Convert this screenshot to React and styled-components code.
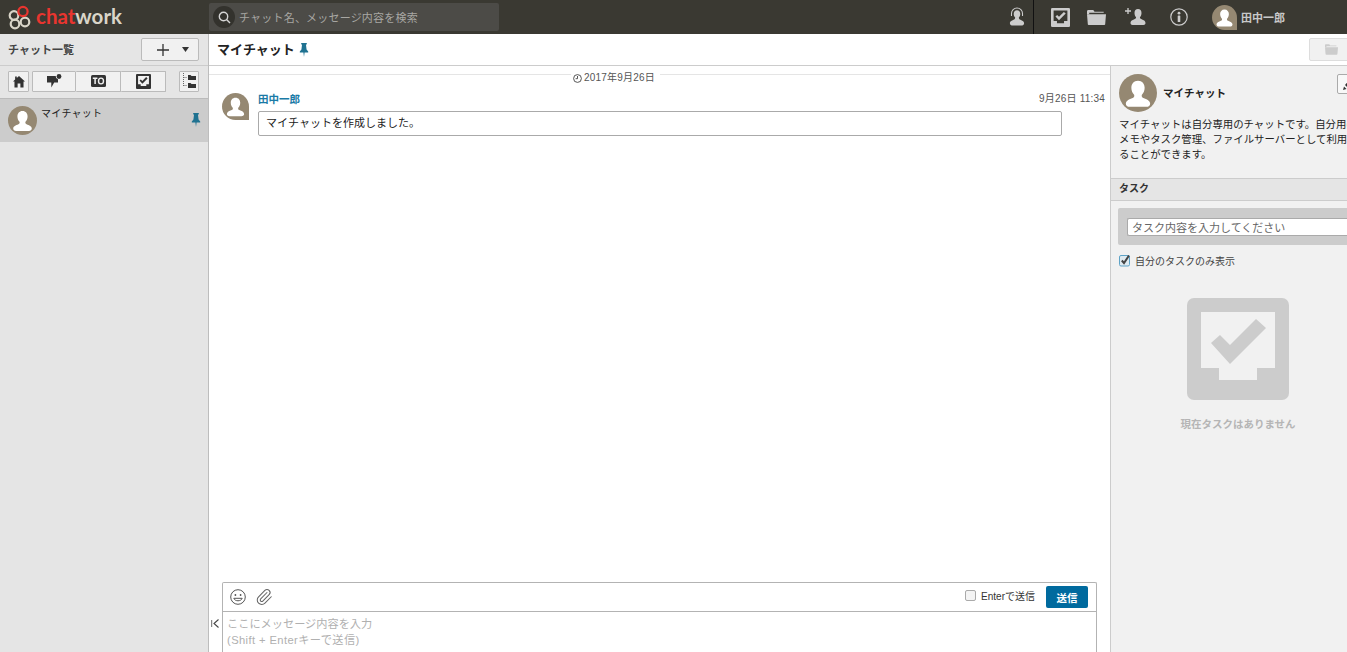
import React from 'react'
import styled, { createGlobalStyle } from 'styled-components'
import { Paperclip } from 'lucide-react'

const GlobalStyle = createGlobalStyle`
  html, body {
    margin: 0;
    height: 100%;
    overflow: hidden;
    background: #fff;
  }
  body {
    font-family: "Liberation Sans", "Noto Sans CJK JP", sans-serif;
    font-size: 11px;
    color: #222;
  }
  * { box-sizing: border-box; }
`

const Page = styled.div`
  width: 1347px;
  height: 652px;
  overflow: hidden;
  display: flex;
  flex-direction: column;
`

// Top bar
const TopBar = styled.header`
  height: 34px;
  flex: none;
  background: #3a3932;
  display: flex;
  align-items: center;
`
const LogoBox = styled.div`
  width: 209px;
  flex: none;
  display: flex;
  align-items: center;
  padding-left: 8px;
  gap: 4px;
`
const LogoText = styled.span`
  font-family: "Lato", sans-serif;
  font-weight: 700;
  font-size: 20.5px;
  line-height: 24px;
  margin-bottom: 3px;
  color: #d9d5c8;
  em { font-style: normal; color: #e9352f; }
`
const Search = styled.div`
  width: 290px;
  height: 28px;
  background: #4c4b47;
  border-radius: 2px;
  display: flex;
  align-items: center;
  padding-left: 4px;
  gap: 4px;
  letter-spacing: 0.2px;
  color: #a8a7a3;
`
const SearchIcon = styled.span`
  width: 22px;
  height: 22px;
  border-radius: 50%;
  background: #33322d;
  display: flex;
  align-items: center;
  justify-content: center;
`
const TopIcons = styled.div`
  margin-left: auto;
  height: 34px;
  display: flex;
  align-items: center;
  padding-right: 62px;
`
const TopIcon = styled.span`
  width: ${p => p.$w}px;
  height: 34px;
  flex: none;
  display: flex;
  align-items: center;
  justify-content: center;
  border-right: ${p => (p.$sep ? '1px solid #111' : 'none')};
`
const UserName = styled.span`
  color: #c8c8c8;
  font-weight: 700;
  margin-left: 4px;
`

// Body
const Body = styled.div`
  flex: 1;
  min-height: 0;
  display: flex;
`
const Sidebar = styled.aside`
  width: 209px;
  flex: none;
  background: #e5e5e5;
  border-right: 1px solid #bdbdbd;
  display: flex;
  flex-direction: column;
`
const SideTitleRow = styled.div`
  height: 32px;
  flex: none;
  display: flex;
  align-items: center;
  justify-content: space-between;
  padding: 0 9px 0 8px;
  border-bottom: 1px solid #ccc;
`
const SideTitle = styled.span`
  font-weight: 700;
  font-size: 11px;
  margin-bottom: 2px;
  color: #444;
`
const PlusButton = styled.button`
  width: 58px;
  height: 23px;
  padding: 0 9px 0 15px;
  background: #f1f1f1;
  border: 1px solid #bbb;
  border-radius: 2px;
  display: flex;
  align-items: center;
  justify-content: space-between;
`
const FilterRow = styled.div`
  height: 33px;
  flex: none;
  display: flex;
  align-items: center;
  padding: 0 9px 2px 8px;
  border-bottom: 1px solid #bbb;
`
const FilterBtn = styled.button`
  width: ${p => p.$w}px;
  height: 21px;
  padding: 0;
  background: #f1f1f1;
  border: 1px solid #bbb;
  margin-left: ${p => p.$ml || 0}px;
  border-left-width: ${p => (p.$joined ? 0 : 1)}px;
  border-radius: 1px;
  display: flex;
  align-items: center;
  justify-content: center;
`
const RoomRow = styled.div`
  height: 43px;
  background: #ccc;
  display: flex;
  padding: 7px 5px 0 8px;
`
const RoomName = styled.span`
  margin: 1px 0 0 4px;
  font-size: 10px;
  line-height: 14px;
  letter-spacing: 0.2px;
  color: #222;
`
const RoomPin = styled.span`
  margin-left: auto;
  padding-top: 7px;
`
const Avatar = styled.span`
  width: ${p => p.$size}px;
  height: ${p => p.$size}px;
  flex: none;
  background: #958872;
  border-radius: ${p => (p.$cut ? '50% 50% 0 50%' : '50%')};
  overflow: hidden;
  display: block;
  svg { display: block; width: 100%; height: 100%; }
`

// Chat column
const Main = styled.main`
  flex: 1;
  min-width: 0;
  display: flex;
  flex-direction: column;
`
const ChatHeader = styled.div`
  height: 32px;
  flex: none;
  border-bottom: 1px solid #ccc;
  display: flex;
  align-items: center;
  padding-left: 8px;
  gap: 2px;
`
const ChatTitle = styled.h1`
  margin: 0 0 2px;
  font-size: 13px;
  font-weight: 700;
  color: #222;
`
const FileButton = styled.div`
  margin-left: auto;
  width: 60px;
  margin-right: -22px;
  height: 23px;
  background: #f1f1f1;
  border: 1px solid #ddd;
  border-radius: 2px;
  display: flex;
  align-items: center;
  padding-left: 15px;
`
const Columns = styled.div`
  flex: 1;
  min-height: 0;
  display: flex;
`
const ChatColumn = styled.section`
  width: 901px;
  flex: none;
  display: flex;
  flex-direction: column;
`
const DateRow = styled.div`
  height: 27px;
  flex: none;
  display: flex;
  align-items: flex-start;
`
const DateLine = styled.span`
  flex: ${p => (p.$left ? '0 0 362px' : '1')};
  margin-top: 8px;
  border-top: 1px solid #e5e5e5;
`
const DateLabel = styled.span`
  display: flex;
  align-items: center;
  gap: 2px;
  padding: 5px 5px 0 2px;
  font-size: 10px;
  letter-spacing: 0.2px;
  line-height: 14px;
  color: #555;
`
const Message = styled.article`
  display: flex;
  padding: 0 5px 0 13px;
`
const MessageBody = styled.div`
  flex: 1;
  margin-left: 9px;
`
const MessageMeta = styled.div`
  display: flex;
  justify-content: space-between;
  height: 18px;
  line-height: 12px;
`
const Sender = styled.span`
  font-weight: 700;
  font-size: 10.5px;
  color: #1a7aa6;
`
const Stamp = styled.span`
  font-size: 10px;
  letter-spacing: 0.2px;
  color: #555;
`
const Bubble = styled.div`
  width: 804px;
  height: 25px;
  border: 1px solid #aaa;
  border-radius: 2px;
  padding-left: 7px;
  line-height: 22px;
  color: #222;
`
const ComposerRow = styled.div`
  margin-top: auto;
  display: flex;
  padding-left: 1px;
`
const Collapse = styled.span`
  width: 12px;
  flex: none;
  padding: 37px 0 0 1px;
`
const Composer = styled.div`
  width: 875px;
  height: 70px;
  border: 1px solid #b3b3b3;
  border-bottom: none;
  border-radius: 2px 2px 0 0;
`
const ComposerBar = styled.div`
  height: 29px;
  border-bottom: 1px solid #b3b3b3;
  display: flex;
  align-items: center;
  padding: 0 8px 0 7px;
  gap: 9px;
`
const EnterLabel = styled.label`
  margin: 0 2px 3px auto;
  display: flex;
  align-items: center;
  gap: 5px;
  font-size: 10px;
  color: #333;
`
const EmptyBox = styled.span`
  width: 11px;
  height: 11px;
  background: #f4f4f4;
  border: 1px solid #aaa;
  border-radius: 2px;
`
const SendButton = styled.button`
  width: 42px;
  height: 22px;
  padding: 0;
  border: none;
  border-radius: 2px;
  background: #006a9e;
  color: #fff;
  font: 700 10.5px "Liberation Sans", "Noto Sans CJK JP", sans-serif;
`
const Placeholder = styled.div`
  padding: 4px 4px 0;
  font-size: 11.2px;
  line-height: 16px;
  color: #b0b0b0;
`
const ShiftHint = styled.span`
  letter-spacing: 0.4px;
`

// Right pane
const RightPane = styled.aside`
  width: 255px;
  flex: none;
  background: #f1f1f1;
  border-left: 1px solid #ccc;
`
const RoomInfo = styled.div`
  height: 112px;
  padding: 8px 0 0 8px;
`
const RoomHead = styled.div`
  display: flex;
  align-items: center;
  gap: 6px;
`
const RoomTitle = styled.strong`
  font-size: 10.5px;
  margin-bottom: 2px;
  color: #222;
`
const EditButton = styled.span`
  margin: 0 6px 18px auto;
  width: 22px;
  height: 20px;
  background: #f8f8f8;
  border: 1px solid #aaa;
  border-radius: 2px;
  display: flex;
  align-items: center;
  justify-content: center;
`
const RoomDesc = styled.p`
  margin: 5px 0 0;
  width: 241px;
  font-size: 10.4px;
  line-height: 15px;
  color: #222;
`
const SectionBar = styled.div`
  height: 23px;
  background: #e5e5e5;
  border-top: 1px solid #ccc;
  border-bottom: 1px solid #ccc;
  padding-left: 8px;
  line-height: 19px;
  font-size: 10px;
  font-weight: 700;
  color: #333;
`
const TaskForm = styled.div`
  margin: 7px 0 0 7px;
  height: 37px;
  background: #ccc;
  border-radius: 2px;
  padding: 10px 0 0 9px;
`
const TaskInput = styled.div`
  height: 18px;
  background: #fff;
  border-top: 1px solid #aaa;
  border-bottom: 1px solid #aaa;
  border-left: 1px solid #aaa;
  border-radius: 2px;
  padding-left: 4px;
  line-height: 18px;
  font-size: 11px;
  color: #666;
`
const MineRow = styled.div`
  margin: 8px 0 0 8px;
  display: flex;
  align-items: center;
  gap: 4px;
  height: 14px;
  font-size: 10px;
  color: #444;
`
const EmptyState = styled.div`
  margin-top: 31px;
  display: flex;
  flex-direction: column;
  align-items: center;
  gap: 16px;
  font-size: 10.5px;
  font-weight: 700;
  color: #b5b5b5;
`

// Icons
const Person = () => (
  <svg viewBox="0 0 40 40">
    <path fill="#fff" d="M20 7c-4.500 0-7 3.400-7 7.500 0 3 1.100 5.600 2.900 7.300.6 1.600-.1 2.800-1.500 3.400-3.700 1.400-7.200 2.800-7.200 6 0 1.900 1.600 3.300 4 3.300h17.600c2.400 0 4-1.400 4-3.300 0-3.200-3.500-4.600-7.200-6-1.400-.6-2.100-1.800-1.500-3.400 1.800-1.700 2.900-4.300 2.900-7.300C27 10.400 24.500 7 20 7z" />
  </svg>
)

const Pin = () => (
  <svg width="14" height="14" viewBox="0 0 12 12" style={{ display: 'block' }}>
    <path fill="#1f7291" d="M3.600 0h4.800v1l-.7.500.5 4.100L9.600 7.200v.9H6.500L6 12l-.5-3.900H2.400v-.9l1.400-1.600.5-4.100-.7-.5z" />
  </svg>
)

const Logo = () => (
  <svg width="24" height="25" viewBox="0 0 24 25" fill="none" strokeWidth="2.200">
    <circle cx="6" cy="10.500" r="4.300" stroke="#d9d5c8" />
    <circle cx="7" cy="19" r="4.300" stroke="#d9d5c8" />
    <circle cx="17" cy="17" r="4.300" stroke="#d9d5c8" />
    <circle cx="15" cy="6.500" r="4.600" stroke="#e9352f" />
  </svg>
)

const TaskGlyph = ({ size, fg, inner }) => (
  <svg width={size} height={size} viewBox="0 0 102 102" style={{ display: 'block' }}>
    <rect width="102" height="102" rx="7" fill={fg} />
    <path fill={inner} d="M14 14h74v56H70v12H32V70H14z" />
    <path fill={fg} d="M24 45L33 37 43 47 69 21 79 30 43 66z" />
  </svg>
)

const HomeIcon = () => (
  <svg width="12" height="13" viewBox="0 0 13 14">
    <path fill="#333" d="M6.500 1L13 7h-1.600v6.500H8V9.200H5v4.300H1.600V7H0l2.300-2.100V1.500h1.800v1.800z" />
  </svg>
)
const CommentIcon = () => (
  <svg width="15" height="14" viewBox="0 0 15 14">
    <path fill="#333" d="M0 2h8.700a3.200 3.200 0 0 0 2.300 3.300v3.200H7.200L4.300 13.500V8.500H0z" />
    <circle cx="12" cy="2.500" r="2.400" fill="#333" />
  </svg>
)
const ToIcon = () => (
  <svg width="15" height="12" viewBox="0 0 15 12">
    <rect width="15" height="12" rx="1.500" fill="#333" />
    <path fill="none" stroke="#f1f1f1" strokeWidth="1.500" d="M1.800 3.200h4.600M4.100 3.200v5.800" />
    <ellipse cx="10" cy="6" rx="2.500" ry="2.900" fill="none" stroke="#f1f1f1" strokeWidth="1.400" />
  </svg>
)
const TreeIcon = () => (
  <svg width="14" height="16" viewBox="0 0 14 16">
    <path fill="none" stroke="#666" strokeDasharray="1 1" d="M1.500 0v14M1.500 4.500H5M1.500 12.500H5" />
    <path fill="#333" d="M6 2h2.500l1 1H14v4H6zM6 10h2.500l1 1H14v4H6z" />
  </svg>
)
const SearchGlyph = () => (
  <svg width="13" height="13" viewBox="0 0 13 13" fill="none" stroke="#d5d5d5" strokeWidth="1.400">
    <circle cx="5.500" cy="5.500" r="4.200" />
    <path d="M8.500 8.500L12 12" />
  </svg>
)
const SupportIcon = () => (
  <svg width="16" height="20" viewBox="0 0 18 22">
    <path fill="none" stroke="#ccc" strokeWidth="1.200" d="M2.800 10V7a6.200 6.200 0 0 1 12.400 0v3" />
    <path fill="#ccc" d="M9 3.500c2.300 0 3.700 1.700 3.700 4 0 1.700-.7 3-1.500 3.900-.3 1.200.1 1.900.9 2.300 2.200 1 4.900 1.700 4.900 4.400 0 1.300-.9 2.400-2.200 2.400H3.200C1.900 20.500 1 19.400 1 18.100c0-2.700 2.700-3.400 4.900-4.400.8-.4 1.200-1.100.9-2.300C6 10.500 5.300 9.200 5.300 7.500c0-2.300 1.400-4 3.700-4z" />
  </svg>
)
const FolderIcon = ({ w = 19, h = 15 }) => (
  <svg width={w} height={h} viewBox="0 0 19 15" style={{ display: 'block' }}>
    <path fill="#ccc" d="M0 1.500C0 .7.500 0 1.300 0h5l1.200 1.800h9.200v1H2.200v1.400H0z" />
    <path fill="#ccc" d="M0 4.200h19l-.8 9.700c0 .6-.5 1.100-1.200 1.100H2c-.7 0-1.200-.5-1.200-1.100z" />
  </svg>
)
const AddUserIcon = () => (
  <svg width="21" height="20" viewBox="0 0 21 20">
    <path stroke="#ccc" strokeWidth="1.300" d="M0 4h6M3 1v6" />
    <path fill="#ccc" d="M13 2c2.200 0 3.500 1.700 3.500 3.900 0 1.900-.7 3.200-1.500 4.200-.2 1 .2 1.500 1 1.900 2 .9 4.500 1.500 4.500 4 0 1.200-.8 2-2 2H7.500c-1.200 0-2-.8-2-2 0-2.500 2.500-3.100 4.500-4 .8-.4 1.200-.9 1-1.900-.8-1-1.500-2.300-1.500-4.200C9.500 3.700 10.800 2 13 2z" />
  </svg>
)
const InfoIcon = () => (
  <svg width="18" height="18" viewBox="0 0 18 18">
    <circle cx="9" cy="9" r="8.200" fill="none" stroke="#ccc" strokeWidth="1.200" />
    <circle cx="9" cy="5.200" r="1.400" fill="#ccc" />
    <rect x="7.700" y="7.500" width="2.600" height="6.500" rx=".6" fill="#ccc" />
  </svg>
)
const ClockIcon = () => (
  <svg width="9" height="9" viewBox="0 0 9 9" fill="none" stroke="#444" strokeWidth=".9">
    <circle cx="4.500" cy="4.500" r="3.900" />
    <path d="M4.500 2v2.700H2.600" />
  </svg>
)
const SmileIcon = () => (
  <svg width="16" height="16" viewBox="0 0 16 16" fill="none" stroke="#555" strokeWidth="1">
    <circle cx="8" cy="8" r="7.300" />
    <circle cx="5.400" cy="6" r=".9" fill="#555" stroke="none" />
    <circle cx="10.600" cy="6" r=".9" fill="#555" stroke="none" />
    <path d="M3.800 9.300c1 3.300 7.400 3.300 8.400 0z" />
  </svg>
)
const EditIcon = () => (
  <svg width="11" height="11" viewBox="0 0 11 11">
    <path fill="#333" d="M7.500 0L11 3.500 5 9 2 6z" />
    <path fill="#333" d="M1 7.500L3.500 10 0 11z" />
  </svg>
)
const CheckedBox = () => (
  <svg width="12" height="13" viewBox="0 0 12 13" style={{ display: 'block' }}>
    <rect x=".5" y="1.500" width="10" height="10.500" rx="1.500" fill="#dfeaf0" stroke="#5ea3c7" />
    <path fill="none" stroke="#444" strokeWidth="2" d="M2.800 6.500l2.200 2.500L10 1.500" />
  </svg>
)
const Caret = () => (
  <svg width="7" height="5" viewBox="0 0 7 5"><path fill="#333" d="M0 0h7L3.500 5z" /></svg>
)
const PlusGlyph = () => (
  <svg width="12" height="12" viewBox="0 0 12 12"><path stroke="#333" strokeWidth="1.300" d="M0 6h12M6 0v12" /></svg>
)
const CollapseGlyph = () => (
  <svg width="9" height="9" viewBox="0 0 9 9" style={{ display: 'block' }} fill="none" stroke="#444">
    <path strokeWidth=".8" d="M.7 1v7" />
    <path strokeWidth="1.100" d="M7.500.5L3 4.500l4.500 4" />
  </svg>
)

export default function App() {
  return (
    <Page>
      <GlobalStyle />
      <TopBar>
        <LogoBox>
          <Logo />
          <LogoText><em>chat</em>work</LogoText>
        </LogoBox>
        <Search>
          <SearchIcon><SearchGlyph /></SearchIcon>
          チャット名、メッセージ内容を検索
        </Search>
        <TopIcons>
          <TopIcon $w={34} $sep><SupportIcon /></TopIcon>
          <TopIcon $w={52}><TaskGlyph size={19} fg="#ccc" inner="#3a3932" /></TopIcon>
          <TopIcon $w={21}><FolderIcon /></TopIcon>
          <TopIcon $w={56}><AddUserIcon /></TopIcon>
          <TopIcon $w={31}><InfoIcon /></TopIcon>
          <TopIcon $w={18} />
          <Avatar $size={25} $cut><Person /></Avatar>
          <UserName>田中一郎</UserName>
        </TopIcons>
      </TopBar>
      <Body>
        <Sidebar>
          <SideTitleRow>
            <SideTitle>チャット一覧</SideTitle>
            <PlusButton><PlusGlyph /><Caret /></PlusButton>
          </SideTitleRow>
          <FilterRow>
            <FilterBtn $w={21}><HomeIcon /></FilterBtn>
            <FilterBtn $w={44} $ml={3}><CommentIcon /></FilterBtn>
            <FilterBtn $w={45} $joined><ToIcon /></FilterBtn>
            <FilterBtn $w={45} $joined><TaskGlyph size={15} fg="#333" inner="#f1f1f1" /></FilterBtn>
            <FilterBtn $w={20} $ml={13}><TreeIcon /></FilterBtn>
          </FilterRow>
          <RoomRow>
            <Avatar $size={29}><Person /></Avatar>
            <RoomName>マイチャット</RoomName>
            <RoomPin><Pin /></RoomPin>
          </RoomRow>
        </Sidebar>
        <Main>
          <ChatHeader>
            <ChatTitle>マイチャット</ChatTitle>
            <Pin />
            <FileButton><FolderIcon w={13} h={11} /></FileButton>
          </ChatHeader>
          <Columns>
            <ChatColumn>
              <DateRow>
                <DateLine $left />
                <DateLabel><ClockIcon />2017年9月26日</DateLabel>
                <DateLine />
              </DateRow>
              <Message>
                <Avatar $size={27} $cut><Person /></Avatar>
                <MessageBody>
                  <MessageMeta>
                    <Sender>田中一郎</Sender>
                    <Stamp>9月26日 11:34</Stamp>
                  </MessageMeta>
                  <Bubble>マイチャットを作成しました。</Bubble>
                </MessageBody>
              </Message>
              <ComposerRow>
                <Collapse><CollapseGlyph /></Collapse>
                <Composer>
                  <ComposerBar>
                    <SmileIcon />
                    <Paperclip size={18} color="#666" strokeWidth={1.4} />
                    <EnterLabel><EmptyBox />Enterで送信</EnterLabel>
                    <SendButton>送信</SendButton>
                  </ComposerBar>
                  <Placeholder>
                    ここにメッセージ内容を入力<br />
                    <ShiftHint>(Shift + Enterキーで送信)</ShiftHint>
                  </Placeholder>
                </Composer>
              </ComposerRow>
            </ChatColumn>
            <RightPane>
              <RoomInfo>
                <RoomHead>
                  <Avatar $size={38}><Person /></Avatar>
                  <RoomTitle>マイチャット</RoomTitle>
                  <EditButton><EditIcon /></EditButton>
                </RoomHead>
                <RoomDesc>
                  マイチャットは自分専用のチャットです。自分用のメモやタスク管理、ファイルサーバーとして利用することができます。
                </RoomDesc>
              </RoomInfo>
              <SectionBar>タスク</SectionBar>
              <TaskForm>
                <TaskInput>タスク内容を入力してください</TaskInput>
              </TaskForm>
              <MineRow><CheckedBox />自分のタスクのみ表示</MineRow>
              <EmptyState>
                <TaskGlyph size={102} fg="#ccc" inner="#f1f1f1" />
                現在タスクはありません
              </EmptyState>
            </RightPane>
          </Columns>
        </Main>
      </Body>
    </Page>
  )
}
